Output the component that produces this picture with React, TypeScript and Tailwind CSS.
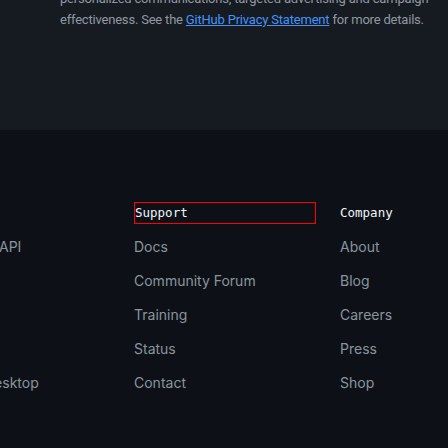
export default function App() {
  const support = ["Docs", "Community Forum", "Training", "Status", "Contact"];
  const company = ["About", "Blog", "Careers", "Press", "Shop"];

  return (
    <div className="h-[448px] w-[448px] overflow-hidden bg-[#0d1117] font-['Inter',sans-serif]">
      {/* cookie notice tail */}
      <div className="h-[142px] bg-[#161b22]">
        <p className="-mt-[12px] ml-[60px] whitespace-nowrap font-['Roboto',sans-serif] text-[13px] leading-[21px] tracking-[-0.2px] text-[#9198a1]">
          personalized communications, targeted advertising and campaign
          <br />
          effectiveness. See the{" "}
          <a href="#" className="text-[#4493f8] underline">
            GitHub Privacy Statement
          </a>{" "}
          for more details.
        </p>
      </div>

      {/* footer */}
      <div className="flex pt-[72px]">
        <div className="w-[134px] shrink-0">
          <ul className="mt-[35px] flex flex-col gap-[14px] text-[14px] leading-[20px] text-[#8b949e]">
            <li className="-ml-[1px]">API</li>
            <li className="invisible">Partners</li>
            <li className="invisible">Electron</li>
            <li className="invisible">Atom</li>
            <li className="-ml-[16px]">Desktop</li>
          </ul>
        </div>
        <div className="w-[206px] shrink-0">
          <h3 className="flex h-[22px] w-[182px] items-center border border-[#ff0000] font-['DejaVu_Sans_Mono',monospace] text-[12.5px] font-normal text-[#f0f6fc]">
            Support
          </h3>
          <ul className="mt-[13px] flex flex-col gap-[14px] text-[14px] leading-[20px] text-[#8b949e]">
            {support.map((s) => (
              <li key={s}>{s}</li>
            ))}
          </ul>
        </div>
        <div className="flex-1">
          <h3 className="flex h-[22px] items-center font-['DejaVu_Sans_Mono',monospace] text-[12.5px] font-normal text-[#f0f6fc]">
            Company
          </h3>
          <ul className="mt-[13px] flex flex-col gap-[14px] text-[14px] leading-[20px] text-[#8b949e]">
            {company.map((s) => (
              <li key={s}>{s}</li>
            ))}
          </ul>
        </div>
      </div>
    </div>
  );
}
